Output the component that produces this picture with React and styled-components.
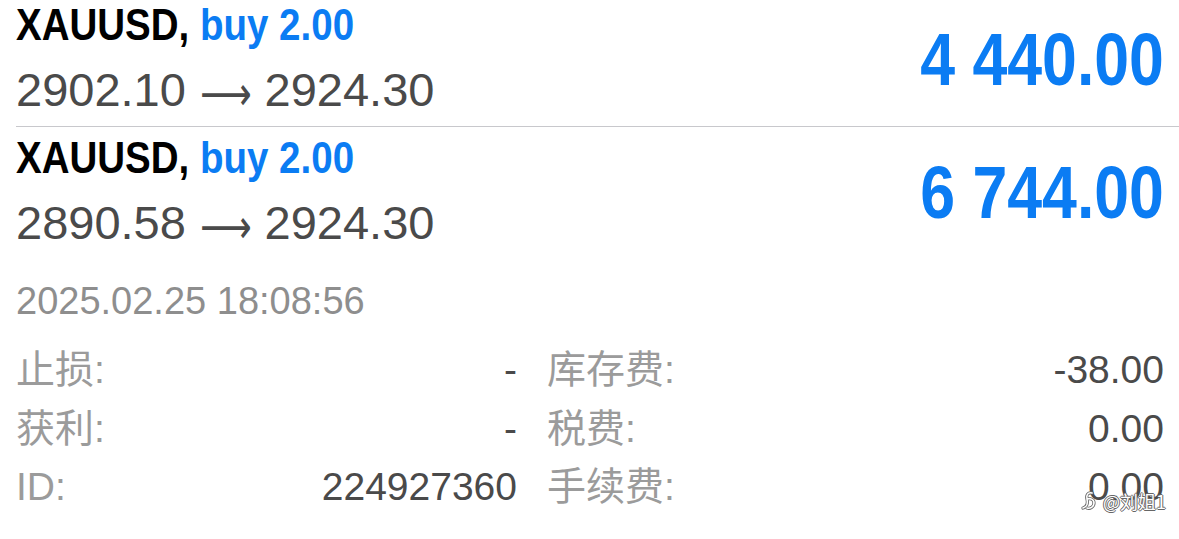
import React from "react";
import styled, { createGlobalStyle } from "styled-components";

const GlobalStyle = createGlobalStyle`
  html, body {
    margin: 0;
    padding: 0;
    background: #ffffff;
  }
  body {
    font-family: "Liberation Sans", Arial, "Noto Sans CJK SC", sans-serif;
    -webkit-font-smoothing: antialiased;
  }
`;

const Page = styled.div`
  position: relative;
  width: 1179px;
  height: 539px;
  overflow: hidden;
  background: #fff;
`;

/* the screenshot is cropped a few pixels into the first row */
const List = styled.div`
  margin-top: -6px;
`;

const Header = styled.div`
  display: flex;
  align-items: center;
  justify-content: space-between;
  margin-left: 16px;
  padding: 7px 15px ${(p) => (p.$expanded ? "0" : "8px")} 0;
  border-bottom: ${(p) => (p.$expanded ? "none" : "1px solid #c8c8cc")};
`;

const Info = styled.div`
  display: flex;
  flex-direction: column;
  align-items: flex-start;
`;

/* condensed bold, like the iOS heading face */
const Title = styled.div`
  font-size: 44px;
  line-height: 48px;
  font-weight: 700;
  color: #000;
  white-space: nowrap;
  transform: scaleX(0.875);
  transform-origin: left center;
`;

const Side = styled.span`
  color: #0b7cf3;
`;

const Prices = styled.div`
  margin-top: 13px;
  height: 56px;
  font-size: 47px;
  line-height: 56px;
  color: #4a4a4a;
  white-space: nowrap;
`;

const Arrow = styled.span`
  display: inline-block;
  font-family: "DejaVu Sans", sans-serif;
  font-size: 36px;
  line-height: 0;
  margin: 0 13px 0 14px;
  color: #4a4a4a;
  transform: scaleY(1.3);
`;

const Profit = styled.div`
  font-size: 75px;
  line-height: 75px;
  font-weight: 700;
  color: #0b7cf3;
  white-space: nowrap;
  transform: scaleX(0.835);
  transform-origin: right center;
`;

const Details = styled.div`
  padding: 0 15px 0 16px;
`;

const OpenTime = styled.div`
  margin-top: 27px;
  font-size: 38px;
  line-height: 46px;
  color: #8e8e8e;
`;

const Grid = styled.div`
  margin-top: 17px;
  display: grid;
  grid-template-columns: 501px 1fr;
  column-gap: 30px;
`;

const Cell = styled.div`
  display: flex;
  justify-content: space-between;
  align-items: baseline;
  font-size: 39px;
  line-height: 58.5px;
  white-space: nowrap;
`;

const Label = styled.span`
  color: #9b9b9b;
  font-family: "Liberation Sans", "Noto Sans CJK SC", sans-serif;
`;

const Value = styled.span`
  color: #4a4a4a;
`;

const Watermark = styled.div`
  position: absolute;
  top: 490px;
  right: 13px;
  display: flex;
  align-items: center;
  gap: 4px;
  font-family: "Noto Sans CJK SC", sans-serif;
  font-size: 18px;
  line-height: 22px;
  color: #fff;
  text-shadow: -1px 0 #666, 1px 0 #666, 0 -1px #666, 0 1px #666;
`;

const positions = [
  { symbol: "XAUUSD", side: "buy 2.00", open: "2902.10", close: "2924.30", profit: "4 440.00" },
  {
    symbol: "XAUUSD",
    side: "buy 2.00",
    open: "2890.58",
    close: "2924.30",
    profit: "6 744.00",
    time: "2025.02.25 18:08:56",
    details: [
      ["止损:", "-", "库存费:", "-38.00"],
      ["获利:", "-", "税费:", "0.00"],
      ["ID:", "224927360", "手续费:", "0.00"],
    ],
  },
];

function Position({ item }) {
  const expanded = Boolean(item.details);
  return (
    <div>
      <Header $expanded={expanded}>
        <Info>
          <Title>
            {item.symbol}, <Side>{item.side}</Side>
          </Title>
          <Prices>
            {item.open}
            <Arrow>⟶</Arrow>
            {item.close}
          </Prices>
        </Info>
        <Profit>{item.profit}</Profit>
      </Header>
      {expanded && (
        <Details>
          <OpenTime>{item.time}</OpenTime>
          <Grid>
            {item.details.map((row) => (
              <React.Fragment key={row[0]}>
                <Cell>
                  <Label>{row[0]}</Label>
                  <Value>{row[1]}</Value>
                </Cell>
                <Cell>
                  <Label>{row[2]}</Label>
                  <Value>{row[3]}</Value>
                </Cell>
              </React.Fragment>
            ))}
          </Grid>
        </Details>
      )}
    </div>
  );
}

export default function App() {
  return (
    <Page>
      <GlobalStyle />
      <List>
        {positions.map((item, index) => (
          <Position key={index} item={item} />
        ))}
      </List>
      <Watermark>
        <svg width="20" height="22" viewBox="0 0 20 22">
          <path
            d="M13 3 C9 2 7 5 8 9 C9 13 8 17 4 18 M8 9 C11 8 15 9 15 13 C15 17 11 19 8 18"
            fill="none"
            stroke="#666"
            strokeWidth="3.2"
            strokeLinecap="round"
          />
          <path
            d="M13 3 C9 2 7 5 8 9 C9 13 8 17 4 18 M8 9 C11 8 15 9 15 13 C15 17 11 19 8 18"
            fill="none"
            stroke="#fff"
            strokeWidth="1.6"
            strokeLinecap="round"
          />
        </svg>
        <span>@刘姐1</span>
      </Watermark>
    </Page>
  );
}
